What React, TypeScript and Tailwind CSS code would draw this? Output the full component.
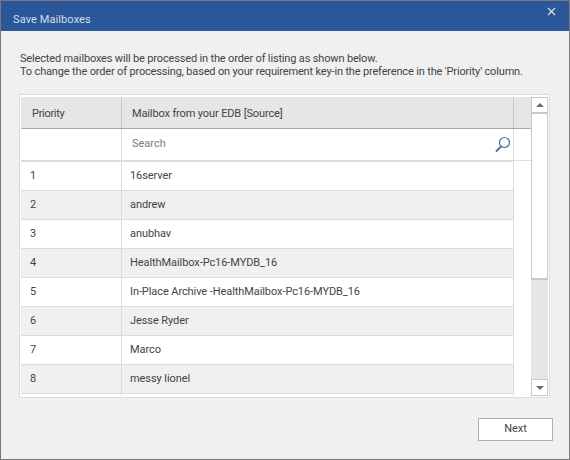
const rows = [
  { id: 1, name: '16server' },
  { id: 2, name: 'andrew' },
  { id: 3, name: 'anubhav' },
  { id: 4, name: 'HealthMailbox-Pc16-MYDB_16' },
  { id: 5, name: 'In-Place Archive -HealthMailbox-Pc16-MYDB_16' },
  { id: 6, name: 'Jesse Ryder' },
  { id: 7, name: 'Marco' },
  { id: 8, name: 'messy lionel' },
]

function Row({ id, name, shaded }: { id: number; name: string; shaded: boolean }) {
  return (
    <div className={`flex h-[29px] w-[493px] border-b border-[#dcdcdc] tracking-[-0.08px] ${shaded ? 'bg-[#f0f0f0]' : 'bg-white'}`}>
      <div className="flex w-[101px] items-center border-r border-[#dcdcdc] pl-[9px]">{id}</div>
      <div className="flex w-[392px] items-center border-r border-[#dcdcdc] pl-[8px]">{name}</div>
    </div>
  )
}

export default function App() {
  return (
    <div className="flex h-[460px] w-[570px] flex-col overflow-hidden border border-[#7a7a7a] bg-[#f0f0f0] font-['Roboto',sans-serif] text-[11px] whitespace-nowrap text-[#444444]">
      <div className="flex h-[30px] shrink-0 justify-between bg-[#2b579a] pl-3 pr-[13px] text-[#d5deec]">
        <span className="mt-[11px] tracking-[0.1px]">Save Mailboxes</span>
        <svg width="9" height="9" viewBox="0 0 9 9" className="mt-[6px]">
          <path d="M1 1l7 7M8 1l-7 7" stroke="#d5deec" strokeWidth="1.3" />
        </svg>
      </div>
      <div className="mt-[21px] px-[19px] leading-[13px] tracking-[-0.16px]">
        <p>Selected mailboxes will be processed in the order of listing as shown below.</p>
        <p>To change the order of processing, based on your requirement key-in the preference in the 'Priority' column.</p>
      </div>
      <div className="ml-[18px] mt-[16px] flex h-[304px] w-[531px] border border-[#dcdcdc] bg-white px-px pt-[2px] pb-px">
        <div className="w-[511px] overflow-hidden">
          <div className="flex h-[32px] border-b border-[#a9a9a9] bg-[#e6e6e6]">
            <div className="flex w-[101px] items-center border-r border-[#c8c8c8] pl-[11px] pt-[3px] tracking-[-0.3px]">Priority</div>
            <div className="flex w-[392px] items-center border-r border-[#c8c8c8] pl-[10px] pt-[3px] tracking-[-0.13px]">Mailbox from your EDB [Source]</div>
          </div>
          <div className="flex h-[33px]">
            <div className="w-[101px] border-r border-b-2 border-[#dcdcdc]" />
            <div className="flex w-[392px] items-center justify-between border-r border-b-2 border-[#dcdcdc] pl-[10px] pr-[2px] text-[#7d7d7d]">
              <span>Search</span>
              <svg width="16" height="17" viewBox="0 0 16 17" fill="none" stroke="#4f6f9f">
                <circle cx="9.5" cy="6.5" r="5" strokeWidth="1.2" />
                <path d="M6 10.5l-5 5" strokeWidth="2" />
              </svg>
            </div>
            <div className="h-[32px] flex-1 border-b border-[#dcdcdc]" />
          </div>
          {rows.map((row, i) => (
            <Row key={row.id} id={row.id} name={row.name} shaded={i % 2 === 1} />
          ))}
          <div className="flex h-[3px]">
            <div className="w-[101px] border-r border-[#dcdcdc]" />
            <div className="w-[392px] border-r border-[#dcdcdc]" />
          </div>
        </div>
        <div className="flex w-[17px] flex-col">
          <div className="flex h-[17px] shrink-0 items-center justify-center border-x border-t border-b-2 border-[#c8c8c8]">
            <div className="h-0 w-0 border-x-[4px] border-b-[4px] border-x-transparent border-b-[#6d6d6d]" />
          </div>
          <div className="h-[166px] shrink-0 border-x border-b-2 border-[#c8c8c8] bg-white" />
          <div className="flex-1 bg-[#e6e6e6]" />
          <div className="flex h-[17px] shrink-0 items-center justify-center border border-[#c8c8c8] bg-white">
            <div className="h-0 w-0 border-x-[4px] border-t-[4px] border-x-transparent border-t-[#6d6d6d]" />
          </div>
        </div>
      </div>
      <div className="mt-[20px] flex justify-end pr-[16px]">
        <button className="h-[23px] w-[75px] border border-[#adadad] bg-white text-[#444444]">Next</button>
      </div>
    </div>
  )
}
